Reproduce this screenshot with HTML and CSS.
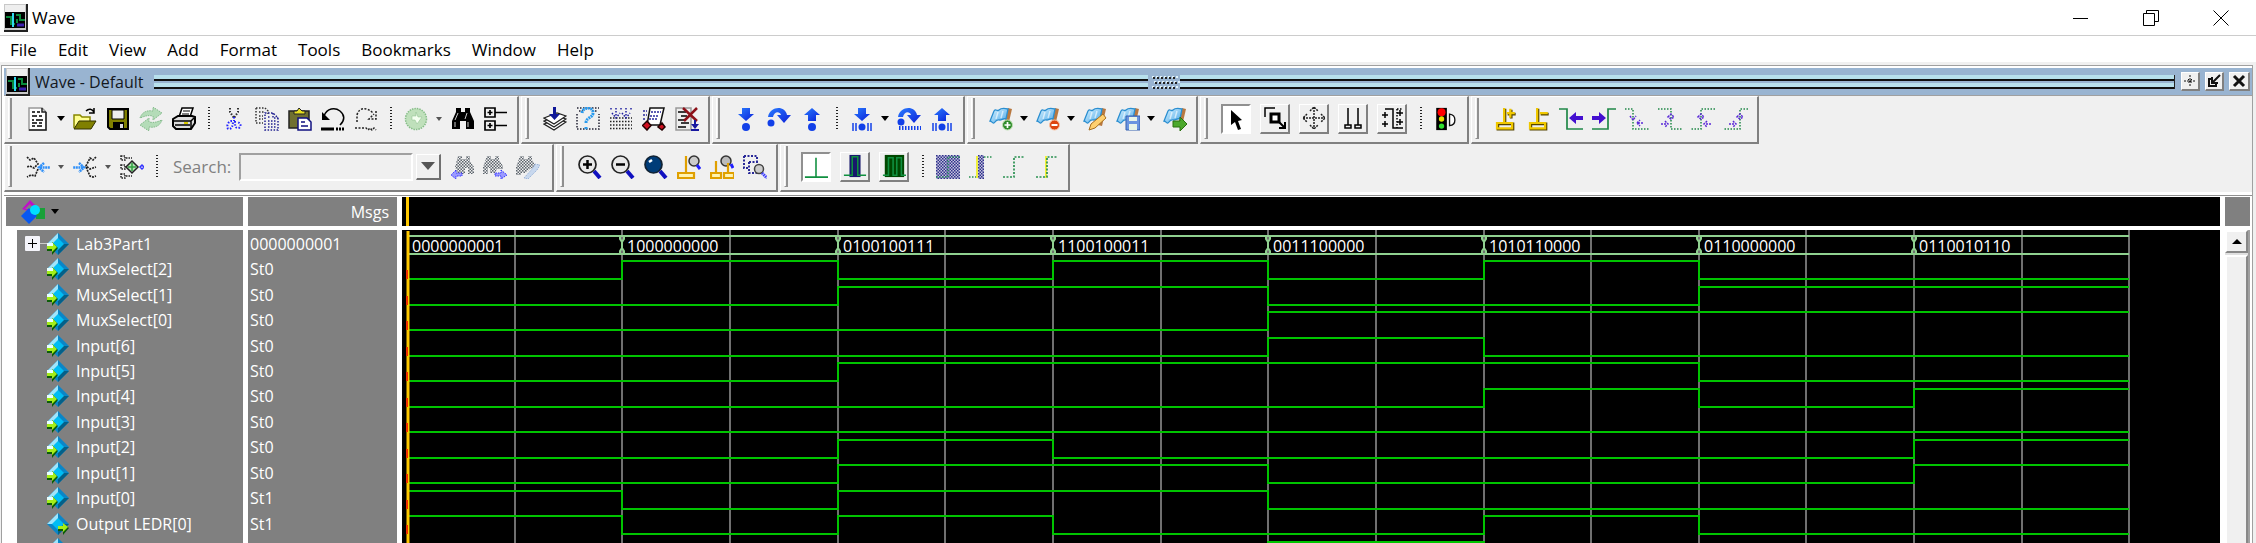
FILE: index.html
```html
<!DOCTYPE html>
<html lang="en">
<head>
<meta charset="utf-8">
<title>Wave</title>
<link rel="stylesheet" href="styles.css">
</head>
<body>
<svg class="defs" aria-hidden="true">
  <defs>
    <pattern id="chk" width="3" height="3" patternUnits="userSpaceOnUse"><path d="M0 0h1.500v1.500H0zM1.500 1.500h1.500v1.500h-1.500z" fill="#5c646c"/></pattern>
    <pattern id="chkblue" width="3" height="3" patternUnits="userSpaceOnUse"><rect width="3" height="3" fill="#c4c4dc"/><path d="M0 0h1.500v1.500H0zM1.500 1.500h1.500v1.500h-1.500z" fill="#30308c"/></pattern>
    <linearGradient id="gb" x1="0" y1="0" x2="1" y2="1"><stop offset="0" stop-color="#2a7dff"/><stop offset="1" stop-color="#0a1fd8"/></linearGradient>
    <linearGradient id="gf" x1="0" y1="0" x2="1" y2="1"><stop offset="0" stop-color="#d8f2ff"/><stop offset="1" stop-color="#4aa8e8"/></linearGradient>
    <symbol id="app" viewBox="0 0 24 28"><path d="M0 0h24v28H0z" fill="#222"/><path d="M0 0h22v26H0z" fill="#c8c8c8"/><path d="M1 1h20v7H1z" fill="#eee"/><path d="M1 8h20v16H1z" fill="#000"/><path d="M2 13h5v7h4M12 11h4v5h5M13 19v-4" fill="none" stroke="#0a8a3c" stroke-width="2"/><path d="M9 9v14" stroke="#30d8f0" stroke-width="2"/><path d="M13 21h7" stroke="#3a20b0" stroke-width="3"/></symbol>
    <symbol id="doc" viewBox="0 0 24 24"><path d="M3 1h13l4 4v18H3z" fill="#fff" stroke="#999" stroke-width="1.500"/><path d="M20 5v18H3M16 1v4h4" fill="none" stroke="#222" stroke-width="1.500"/><path d="M6 5h3m2 0h3M6 9h5m2 0h3M6 13h2m2 0h7M6 16h5m2 0h3M6 19h3m2 0h5" stroke="#000" stroke-width="1.500"/></symbol>
    <symbol id="open" viewBox="0 0 24 24"><path d="M1 21V8h6l2 2h8v4" fill="#ffff90" stroke="#888800" stroke-width="1.500"/><path d="M1 22l5-8h17l-5 8z" fill="#808000" stroke="#303000"/><path d="M13 4c3-3 6-2 8 1m0-4v5h-5" fill="none" stroke="#000" stroke-width="1.500"/></symbol>
    <symbol id="save" viewBox="0 0 24 24"><path d="M2 2h20v20H4l-2-2z" fill="#808000" stroke="#000" stroke-width="2"/><path d="M6 3h12v9H6z" fill="#eee" stroke="#000"/><path d="M7 15h11v7H7z" fill="#000"/><path d="M14 17h3v4h-3z" fill="#ddd"/></symbol>
    <symbol id="refresh" viewBox="0 0 24 24"><g fill="#b4dcb8" stroke="#80b888" stroke-dasharray="1.500 1"><path d="M1 11C3 5 8 3 14 4V0l9 6-9 7V9C9 8 6 9 1 11z"/><path d="M23 13c-2 6-7 8-13 7v4l-9-6 9-7v4c5 1 8 0 13-2z"/></g></symbol>
    <symbol id="print" viewBox="0 0 24 24"><path d="M7 10l3-9h11l-3 9z" fill="#fff" stroke="#000" stroke-width="1.500"/><path d="M11 4h7M10 7h7" stroke="#000"/><path d="M1 12l5-3h14l3 1v6l-4 6H4l-3-3z" fill="#ddd" stroke="#000" stroke-width="2"/><path d="M2 14h17v7M3 18h15m4-7l-3 3" fill="none" stroke="#000" stroke-width="1.500"/><path d="M12 15h4v2h-4z" fill="#d8c800"/></symbol>
    <symbol id="cut" viewBox="0 0 24 24"><g fill="none" stroke-width="2" stroke-dasharray="1.500 1.500"><path d="M8 1v4l4 6 4-6V1" stroke="#333"/><path d="M12 10v4M10 14c-5 0-6 8-3 8s4-4 4-8m2 0c0 4 0 7 3 7s4-5-1-6" stroke="#2020ff"/></g></symbol>
    <symbol id="copy" viewBox="0 0 24 24"><g fill="none" stroke-width="1.500" stroke-dasharray="1.500 1.500"><path d="M1 1h9l3 3v3M1 1v15h7M4 5h5M4 9h4M4 12h4" stroke="#333"/><path d="M10 6h8l5 5v12H10zM18 6v5h5M13 10h3M13 14h8M13 17h8M13 20h8" stroke="#202090"/></g></symbol>
    <symbol id="paste" viewBox="0 0 24 24"><path d="M1 4h20v17H1z" fill="#707030" stroke="#222" stroke-width="1.500"/><path d="M6 7V4h3l2-3 3 3h3v3z" fill="#e8e020" stroke="#222"/><path d="M10 11h9l4 4v8H10z" fill="#fff" stroke="#101080" stroke-width="1.500"/><path d="M13 15h4M13 19h7" stroke="#101080" stroke-width="1.500"/></symbol>
    <symbol id="undo" viewBox="0 0 24 24"><path d="M3 9C6 1 14 0 19 4s5 9 0 14" fill="none" stroke="#000" stroke-width="1.500"/><path d="M1 5l8 8H1z"/><path d="M0 22h13m2 0h2m1 0h2m1 0h2" stroke="#000" stroke-width="3"/></symbol>
    <symbol id="redo" viewBox="0 0 24 24"><path d="M3 15V8c2-8 10-8 16-2m3-2v8h-7l5-5M1 21h11l2 2 2-2 2 2 2-2 2 2" fill="none" stroke="#222" stroke-width="1.500" stroke-dasharray="2 1.500"/></symbol>
    <symbol id="go" viewBox="0 0 24 24"><circle cx="12" cy="12" r="10.500" fill="#bfe0bb" stroke="#86bd88" stroke-width="1.500" stroke-dasharray="1.500 1"/><path d="M12 5v4H8v4h3l2 4 5-7h-4z" fill="#f4fff0" stroke="#8cbd8c" stroke-width=".5"/></symbol>
    <symbol id="find" viewBox="0 0 24 24"><path d="M5 1h5v4h4V1h5v4l4 9v8h-8v-8H9v8H1v-8l4-9z"/><path d="M7 6L4 13M16 6l-2 6M4 15v5M17 15v5" stroke="#ccc"/></symbol>
    <symbol id="tree" viewBox="0 0 24 24"><path d="M1 1h10v9H1zM1 14h10v9H1zM11 5.500h12M11 18.500h12M3.500 5.500h5M6 3v5M3.500 18.500h5M6 16v5" fill="none" stroke="#000" stroke-width="1.700"/></symbol>
    <symbol id="layers" viewBox="0 0 24 24"><g fill="#fff" stroke="#222" stroke-width="1.300"><path d="M1 17l13-5 9 3-12 8z"/><path d="M1 14l13-5 9 3-12 8z"/><path d="M1 11l13-5 9 3-12 8z"/></g><path d="M10 0h3v7h4l-5.500 6L6 7h4z" fill="#101898"/></symbol>
    <symbol id="help" viewBox="0 0 24 24"><path d="M1 7v15h22V7M1 1h22M3 4h4M16 4h6" fill="none" stroke="#223" stroke-width="1.500" stroke-dasharray="1.500 1.500"/><path d="M6 6c1-7 12-6 11 0 0 5-7 4-7 10m0 4v3" fill="none" stroke="#2a9bee" stroke-width="3" stroke-dasharray="2 .7"/></symbol>
    <symbol id="grid" viewBox="0 0 24 24"><path d="M1 11h22M1 14.500h22M1 18h22M1 21.500h22" stroke="#222" stroke-width="1.500" stroke-dasharray="1.500 1.500"/><path d="M2 1v3m5-3v10M3 6l4 5 4-5M12 1v3m5-3v10m-4-5l4 5 4-5m1-5v3" fill="none" stroke="#2020a0" stroke-width="1.500" stroke-dasharray="1.500 1.500"/></symbol>
    <symbol id="scroll" viewBox="0 0 24 24"><path d="M8 1h14l-1 4-3 13H5z" fill="#fff" stroke="#111" stroke-width="1.500"/><path d="M9 5h10M8 9h9M7 12h9M1 4h4M1 8h4M1 12h3" stroke="#28289a" stroke-width="1.500" stroke-dasharray="2 1"/><path d="M5 14l4 4.500L5 23 .5 18.500zM20 16l3 4-3 3-4-3z" fill="#d01020" stroke="#200" stroke-width="1.500"/></symbol>
    <symbol id="docx" viewBox="0 0 24 24"><path d="M1 1h15v22H1z" fill="#eee" stroke="#999" stroke-width="1.500"/><path d="M3 5h8M6 9h6M3 13h7M6 16h8M3 20h8" stroke="#000" stroke-width="1.500"/><path d="M8 1l14 13M22 1L9 14" stroke="#8c1018" stroke-width="2.500"/><path d="M20 13v6M16 23h8" stroke="#1818a0" stroke-width="2"/><path d="M16 17h8l-4 5z" fill="#1818a0"/></symbol>
    <symbol id="down" viewBox="0 0 24 24"><path d="M8 1h8v6h4l-8 7-8-7h4z" fill="url(#gb)"/><circle cx="12" cy="20" r="4" fill="#1240e8"/></symbol>
    <symbol id="over" viewBox="0 0 24 24"><path d="M1 10C3-1 18-2 20 8h4l-7 8-7-8h4C13 4 7 4 6 10z" fill="url(#gb)"/><circle cx="4" cy="16" r="3.500" fill="#1240e8"/></symbol>
    <symbol id="up" viewBox="0 0 24 24"><path d="M12 1l8 7h-4v6H8V8H4z" fill="url(#gb)"/><circle cx="12" cy="20" r="4" fill="#1240e8"/></symbol>
    <symbol id="downb" viewBox="0 0 24 24"><path d="M8 1h8v6h4l-8 7-8-7h4z" fill="url(#gb)"/><circle cx="12" cy="20" r="3.500" fill="#1240e8"/><path d="M3 16v8M6 16v8M18 16v8M21 16v8" stroke="#1240e8" stroke-width="1.500"/></symbol>
    <symbol id="overb" viewBox="0 0 24 24"><path d="M1 10C3-1 18-2 20 8h4l-7 8-7-8h4C13 4 7 4 6 10z" fill="url(#gb)"/><circle cx="4" cy="15" r="3.500" fill="#1240e8"/><path d="M2 21h22" stroke="#1240e8" stroke-width="4" stroke-dasharray="1.500 1.500"/></symbol>
    <symbol id="upb" viewBox="0 0 24 24"><path d="M12 1l8 7h-4v6H8V8H4z" fill="url(#gb)"/><circle cx="12" cy="20" r="3.500" fill="#1240e8"/><path d="M3 16v8M6 16v8M18 16v8M21 16v8" stroke="#1240e8" stroke-width="1.500"/></symbol>
    <symbol id="flag" viewBox="0 0 24 24"><path d="M19 1l4 1-4 17-4-1z" fill="#b87840"/><path d="M5 4c2-3 3 1 5-1s5-2 9-1l-2 10c-3-1-4 1-6 1s-3-1-5 2-3-1-5-1z" fill="url(#gf)" stroke="#2a8ed0" stroke-width="1.300"/><path d="M9 5l-2 7M14 4l-2 7" stroke="#fff" stroke-width="1.500" opacity=".6"/></symbol>
    <symbol id="bplus" viewBox="0 0 24 24"><use href="#flag"/><circle cx="18.500" cy="18" r="5" fill="#2f8a2a" stroke="#bce0b0"/><path d="M18.500 15v6M15.500 18h6" stroke="#fff" stroke-width="1.700"/></symbol>
    <symbol id="bminus" viewBox="0 0 24 24"><use href="#flag"/><circle cx="18.500" cy="18" r="5" fill="#dd4410" stroke="#f8c0a0"/><path d="M15.500 18h6" stroke="#fff" stroke-width="2"/></symbol>
    <symbol id="bedit" viewBox="0 0 24 24"><use href="#flag"/><path d="M6 23l2-6L20 7l3 4-11 10z" fill="#ffd070" stroke="#a87020"/></symbol>
    <symbol id="bsave" viewBox="0 0 24 24"><use href="#flag"/><path d="M10 9h14v14H10z" fill="#6a94e0" stroke="#3560b0"/><path d="M13 10h8v4h-8zM13 17h8v6h-8z" fill="#e8f4e8"/></symbol>
    <symbol id="bgo" viewBox="0 0 24 24"><use href="#flag"/><path d="M10 14h7v-4l7 7-7 7v-4h-7z" fill="#4ca82c" stroke="#2a7010"/></symbol>
    <symbol id="arrow" viewBox="0 0 24 24"><path d="M7 3v15l4-3 3 8 3-1-3-8 4-1z"/></symbol>
    <symbol id="zoommode" viewBox="0 0 24 24"><path d="M2 11V2h10" fill="none" stroke="#000" stroke-width="1.500"/><path d="M8 8h8v8H8z" fill="#fff" stroke="#000" stroke-width="3"/><path d="M16 16l6 6m0-6v6h-6" fill="none" stroke="#000" stroke-width="2"/></symbol>
    <symbol id="pan" viewBox="0 0 24 24"><path d="M12 1v22M1 12h22M8 5l4-4 4 4M8 19l4 4 4-4M5 8l-4 4 4 4M19 8l4 4-4 4" fill="none" stroke="#222" stroke-width="1.500" stroke-dasharray="2 1"/></symbol>
    <symbol id="twocur" viewBox="0 0 24 24"><path d="M7 2v17M17 2v17M4 19h6v3H4zM14 19h6v3h-6z" fill="none" stroke="#000" stroke-width="1.500"/></symbol>
    <symbol id="stretch" viewBox="0 0 24 24"><path d="M5 3h8v19h10M2 9h6M2 18h6M17 7h6M17 16h6M5 6v6M5 15v6M20 4v6M20 13v6" fill="none" stroke="#000" stroke-width="1.500"/><path d="M17 3v19M17 3h6" fill="none" stroke="#000" stroke-width="1.500" stroke-dasharray="1.500 1.500"/></symbol>
    <symbol id="traffic" viewBox="0 0 24 27"><path d="M1 1h12v25H1z"/><circle cx="7" cy="6" r="4.500" fill="#f00"/><circle cx="7" cy="13.500" r="3" fill="#e8e000"/><circle cx="7" cy="21.500" r="3" fill="#30e030"/><path d="M16 8c8 1 8 12 0 13z" fill="#fff" stroke="#111" stroke-width="1.500"/></symbol>
    <symbol id="curadd" viewBox="0 0 24 27"><path d="M4 19h17v6H4zM12 2v17M15 8h9M19 3v10" fill="none" stroke="#554400" stroke-width="3"/><path d="M3 18h17v6H3zM11 1v17M14 7h9M18 2v10" fill="none" stroke="#f0c800" stroke-width="2.500"/></symbol>
    <symbol id="curdel" viewBox="0 0 24 27"><path d="M4 19h17v6H4zM12 2v17M15 8h9" fill="none" stroke="#554400" stroke-width="3"/><path d="M3 18h17v6H3zM11 1v17M14 7h9" fill="none" stroke="#f0c800" stroke-width="2.500"/></symbol>
    <symbol id="eprev" viewBox="0 0 24 24"><path d="M0 2h8v20h16" fill="none" stroke="#208848" stroke-width="1.700"/><path d="M10 11l7-6v4h7v4h-7v4z" fill="#4410d0"/></symbol>
    <symbol id="enext" viewBox="0 0 24 24"><path d="M24 2h-8v20H0" fill="none" stroke="#208848" stroke-width="1.700"/><path d="M14 11L7 5v4H0v4h7v4z" fill="#4410d0"/></symbol>
    <symbol id="e1" viewBox="0 0 24 24"><path d="M0 2h8v20h16" fill="none" stroke="#208848" stroke-width="1.500" stroke-dasharray="1.500 1.500"/><path d="M5 9l3 4 3-4M18 16h-6l3-3m-3 3l3 3" fill="none" stroke="#5a28d8" stroke-width="1.500" stroke-dasharray="2 1"/></symbol>
    <symbol id="e2" viewBox="0 0 24 24"><path d="M0 2h13v20h11" fill="none" stroke="#208848" stroke-width="1.500" stroke-dasharray="1.500 1.500"/><path d="M10 10l3-3 3 3-3 2zM3 17h6M7 14l3 3-3 3" fill="none" stroke="#5a28d8" stroke-width="1.500" stroke-dasharray="2 1"/></symbol>
    <symbol id="e3" viewBox="0 0 24 24"><path d="M24 2H10v20H0" fill="none" stroke="#208848" stroke-width="1.500" stroke-dasharray="1.500 1.500"/><path d="M7 10l3-3 3 3-3 2zM20 17h-6M16 14l-3 3 3 3" fill="none" stroke="#5a28d8" stroke-width="1.500" stroke-dasharray="2 1"/></symbol>
    <symbol id="e4" viewBox="0 0 24 24"><path d="M24 2h-8v20H0" fill="none" stroke="#208848" stroke-width="1.500" stroke-dasharray="1.500 1.500"/><path d="M13 10l3-3 3 3-3 2zM5 17h6M9 14l3 3-3 3" fill="none" stroke="#5a28d8" stroke-width="1.500" stroke-dasharray="2 1"/></symbol>
    <symbol id="mergel" viewBox="0 0 24 24"><path d="M1 2l3 3 4-2 4 6-4 4-4-2-3 1M12 14l-3 7-4-1-4 2" fill="none" stroke="#222" stroke-width="1.700" stroke-dasharray="2 1"/><path d="M18 8l-5 4.500 5 4.500M14 12.500h10" fill="none" stroke="#3090f8" stroke-width="2.500" stroke-dasharray="2 .6"/></symbol>
    <symbol id="merger" viewBox="0 0 24 24"><path d="M23 2l-3 3-3-2-4 8 4 3 3-1 3-1M13 12l4 9 3 1 3-1" fill="none" stroke="#222" stroke-width="1.700" stroke-dasharray="2 1"/><path d="M6 8l5 4.500L6 17M10 12.500H0" fill="none" stroke="#3090f8" stroke-width="2.500" stroke-dasharray="2 .6"/></symbol>
    <symbol id="module" viewBox="0 0 24 24"><path d="M1 1h4v4H1zM1 19h4v4H1zM1 10h4v4H1zM6 3h6M6 21h6" fill="none" stroke="#222" stroke-width="1.500" stroke-dasharray="1.500 1"/><path d="M12 6l6 6-6 6-6-6z" fill="#b8e0b8" stroke="#222" stroke-width="1.500"/><path d="M12 8v8M8 12h8" stroke="#30a040" stroke-width="1.500"/><path d="M22 10l2 2-2 2-2-2z" fill="none" stroke="#33f" stroke-width="1.500"/></symbol>
    <symbol id="findl" viewBox="0 0 24 24"><path d="M8 1h4v3h4V1h4v5l4 6v7h-6v-6h-3v6H8l-3-7z" fill="url(#chk)"/><path d="M6 15l-5 5 5 4v-3h6v-3H6z" fill="#9a9aff" stroke="#3333ff" stroke-dasharray="1.500 1"/></symbol>
    <symbol id="findr" viewBox="0 0 24 24"><path d="M4 1h4v3h4V1h4v4l4 6v3h-6l-2 4H7v-5H5v6H0v-7z" fill="url(#chk)"/><path d="M18 15l6 5-6 4v-3h-6v-3h6z" fill="#9a9aff" stroke="#3333ff" stroke-dasharray="1.500 1"/></symbol>
    <symbol id="findo" viewBox="0 0 24 24"><path d="M4 1h4v3h4V1h4v4l4 6-6 3-5 4H5v2H0v-8z" fill="url(#chk)"/><path d="M8 23l9-10 2-4 5 1-3 5-9 9z" fill="#c8d8ee" stroke="#9cb4d8" stroke-dasharray="1.500 1"/></symbol>
    <symbol id="zin" viewBox="0 0 24 24"><path d="M16 16l6 7" stroke="#1010c0" stroke-width="4"/><circle cx="9.500" cy="9.500" r="8.500" fill="#e8e8e8" stroke="#222" stroke-width="1.700"/><path d="M5 9.500h9M9.500 5v9" stroke="#000" stroke-width="2.500"/></symbol>
    <symbol id="zout" viewBox="0 0 24 24"><path d="M16 16l6 7" stroke="#1010c0" stroke-width="4"/><circle cx="9.500" cy="9.500" r="8.500" fill="#e8e8e8" stroke="#222" stroke-width="1.700"/><path d="M5 9.500h9" stroke="#000" stroke-width="2.500"/></symbol>
    <symbol id="zfull" viewBox="0 0 24 24"><path d="M16 16l6 7" stroke="#1010c0" stroke-width="4"/><circle cx="9.500" cy="9.500" r="8.500" fill="#003c78" stroke="#123" stroke-width="1.700"/><path d="M5 7l3-2" stroke="#fff" stroke-width="2.500"/></symbol>
    <symbol id="zcur" viewBox="0 0 24 24"><path d="M1 18h16v5H1zM9 1v17" fill="#fff4b0" stroke="#e0a000" stroke-width="2.200"/><circle cx="17" cy="6" r="5" fill="#ccc" stroke="#333" stroke-width="1.500"/><path d="M20 10l3 4" stroke="#2020ff" stroke-width="3"/></symbol>
    <symbol id="z2cur" viewBox="0 0 24 24"><circle cx="16" cy="6" r="5" fill="#bbb" stroke="#333" stroke-width="1.500"/><path d="M1 18h10v5H1zM6 6v12M14 18h10v5H14zM18 8v10" fill="#fff4b0" stroke="#e0a000" stroke-width="2.200"/><path d="M21 9l2 4" stroke="#2020ff" stroke-width="3"/></symbol>
    <symbol id="zarea" viewBox="0 0 24 24"><path d="M1 1h13v6M1 1v12h5M6 7h10M6 7v11h8" fill="none" stroke="#282898" stroke-width="2" stroke-dasharray="2 1.500"/><circle cx="16" cy="14" r="4.500" fill="#ccc" stroke="#444" stroke-width="1.500"/><path d="M19 18l5 5" stroke="#3a3aff" stroke-width="3" stroke-dasharray="1.500 .7"/></symbol>
    <symbol id="w1" viewBox="0 0 26 26"><path d="M13 3v20M1 24h25" stroke="#109040" stroke-width="1.700"/></symbol>
    <symbol id="w2" viewBox="0 0 26 26"><path d="M7 1h12v24H7z" fill="#18186c"/><path d="M1 23h9V3h6v20h9" fill="none" stroke="#109040" stroke-width="1.700"/></symbol>
    <symbol id="w3" viewBox="0 0 26 26"><path d="M3 1h21v24H3z" fill="#004800"/><path d="M1 23h6V4h5v19h4V4h5v19h5" fill="none" stroke="#109040" stroke-width="1.700"/></symbol>
    <symbol id="d1" viewBox="0 0 24 24"><path d="M0 0h24v24H0z" fill="url(#chkblue)"/><path d="M0 22h12V2h12" fill="none" stroke="#289060" stroke-width="1.500" stroke-dasharray="1.500 1.500"/></symbol>
    <symbol id="d2" viewBox="0 0 24 24"><path d="M9 0h6v24H9z" fill="url(#chkblue)"/><path d="M8 1v22" stroke="#f0f000" stroke-width="1.500"/><path d="M0 22h7M15 2h8" stroke="#289050" stroke-width="1.500" stroke-dasharray="1.500 1.500"/></symbol>
    <symbol id="d3" viewBox="0 0 24 24"><path d="M1 22h11V2h11" fill="none" stroke="#289050" stroke-width="1.700" stroke-dasharray="2 1.500"/></symbol>
    <symbol id="d4" viewBox="0 0 24 24"><path d="M11 1v22" stroke="#f0f000" stroke-width="1.500"/><path d="M1 22h11V2h11" fill="none" stroke="#289050" stroke-width="1.700" stroke-dasharray="2 1.500"/></symbol>
    <symbol id="gem" viewBox="0 0 22 22"><path d="M11 0l11 11-11 11L0 11z" fill="#0a86c8"/><path d="M11 0v6L6 11H0z" fill="#a0e4fa"/><path d="M22 11H16l-5 5v6z" fill="#046088"/><path d="M11 5l6 6-6 6-6-6z" fill="#00bdf4"/></symbol>
    <symbol id="sigin" viewBox="0 0 22 22"><use href="#gem"/><path d="M0 13h5v-4l6 6-6 7v-4H0z" fill="#0c5c08"/><path d="M0 12h5V9l5 5-5 5v-3H0z" fill="#a4ee18"/><path d="M0 10h6v3H0z" fill="#e8ffff"/></symbol>
    <symbol id="sigout" viewBox="0 0 22 22"><use href="#gem"/><path d="M11 14h5v-4l6 5-6 7v-4h-5z" fill="#0c5c08"/><path d="M11 13h5v-3l5 4-5 5v-3h-5z" fill="#a4ee18"/></symbol>
  </defs>
</svg>

<div class="window">
  <header class="titlebar">
    <svg class="appicon"><use href="#app"/></svg>
    <h1 class="title">Wave</h1>
    <div class="wincontrols">
      <button class="winbtn" aria-label="Minimize"><svg viewBox="0 0 16 16"><path d="M0 8.500h15"/></svg></button>
      <button class="winbtn" aria-label="Restore"><svg viewBox="0 0 16 16"><path d="M.5 3.500h11v12H.5zM3.500 3V.5h12v11H12"/></svg></button>
      <button class="winbtn" aria-label="Close"><svg viewBox="0 0 16 16"><path d="M.5.5l15 15M15.500.5l-15 15"/></svg></button>
    </div>
  </header>

  <nav class="menubar" aria-label="Menu">
    <button class="menu">File</button><button class="menu">Edit</button><button class="menu">View</button><button class="menu">Add</button><button class="menu">Format</button><button class="menu">Tools</button><button class="menu">Bookmarks</button><button class="menu">Window</button><button class="menu">Help</button>
  </nav>

  <main class="dock">
    <div class="panehead">
      <svg class="appicon"><use href="#app"/></svg>
      <h2 class="panetitle">Wave - Default</h2>
      <div class="grip"></div>
      <svg class="gripdots" viewBox="0 0 32 14" aria-hidden="true"><path d="M4 2h26M6 7h26M4 12h26" stroke="#e0f2f8" stroke-width="2" stroke-dasharray="2 2"/><path d="M5 3h24M7 8h24M5 13h24" stroke="#222" stroke-width="2" stroke-dasharray="2 2"/></svg>
      <div class="grip end"></div>
      <button class="panebtn" aria-label="Add window"><svg viewBox="0 0 14 14"><path d="M7 1v12M1 7h12M5 5l4 4M9 5l-4 4" stroke-width="1" stroke-dasharray="2 1"/></svg></button>
      <button class="panebtn" aria-label="Undock"><svg viewBox="0 0 14 14"><path d="M6 5H2v7h7V8M13 1L6 8M5 3v6h6" stroke-width="2"/></svg></button>
      <button class="panebtn" aria-label="Close pane"><svg viewBox="0 0 14 14"><path d="M2 2l10 10M12 2L2 12" stroke-width="3"/></svg></button>
    </div>

    <div class="toolbars">
      <div class="toolrow" id="row1"></div>
      <div class="toolrow" id="row2"></div>
    </div>

    <div class="wavepane">
      <div class="namehead">
        <svg class="shapes" viewBox="0 0 24 24"><path d="M9 0l8 8-5 5-11-4z" fill="#c010c8"/><path d="M4 9l5-5 4 5z" fill="#808080"/><path d="M15 8h9v11h-9z" fill="#18a038"/><path d="M8 8l8 8-8 8-8-8z" fill="#0858f0"/><circle cx="14" cy="10" r="5" fill="#00e0ff"/></svg>
        <button class="drop" aria-label="Signal filter"></button>
      </div>
      <div class="valuehead">Msgs</div>
      <div class="ruler"><span class="cursor"></span></div>
      <div class="corner"></div>
      <div class="names"><div class="signals" id="names"></div></div>
      <div class="values"><div class="signals" id="values"></div></div>
      <div class="plot"><svg class="waves" id="waves" role="img" aria-label="Waveforms"></svg></div>
      <div class="scroll">
        <button class="scrollup" aria-label="Scroll up"><span class="tri"></span></button>
        <div class="thumb"></div>
      </div>
    </div>
  </main>
</div>
<script src="wave.js"></script>
</body>
</html>
```

FILE: styles.css
```css
* { box-sizing: border-box; }
body { margin: 0; background: #f0f0f0; color: #000; font: 17px/24px "Open Sans", "Noto Sans", sans-serif; overflow: hidden; }
button { padding: 0; border: 0; background: none; color: inherit; font: inherit; }
.defs { position: absolute; width: 0; height: 0; }
.window { display: flex; flex-direction: column; height: 100vh; }

.titlebar { display: flex; align-items: center; height: 36px; flex: none; padding-left: 4px; background: #fff; border-bottom: 1px solid #ccc; }
.appicon { width: 24px; height: 28px; flex: none; }
.title { margin: 0 auto 0 4px; font-size: 17px; font-weight: 400; }
.wincontrols { display: flex; }
.winbtn { width: 70px; height: 34px; display: grid; place-items: center; }
.winbtn svg { width: 16px; height: 16px; fill: none; stroke: #000; stroke-width: 1; }

.menubar { display: flex; gap: 1px; height: 29px; flex: none; background: linear-gradient(#fff 26px, #f0f0f0 26px); }
.menu { padding: 0 10px; height: 28px; font-size: 17px; line-height: 28px; }

.dock { flex: 1; min-height: 0; display: flex; flex-direction: column; margin: 0 3px 0 1px; border: 1px solid #a0a0a0; border-width: 1px 1px 0; padding: 2px 0 0 2px; background: #fff; }
.panehead { display: flex; align-items: center; height: 28px; flex: none; padding: 0 2px 0 2px; background: #99b4d1; border-bottom: 1px solid #a0a0a0; }
.panetitle { margin: 0 10px 0 5px; font-size: 16px; font-weight: 400; color: #14181e; }
.grip { flex: 1; height: 14px; background: linear-gradient(#b8e0ec 4px, #111 4px 6px, #99b4d1 6px 8px, #b8e0ec 8px 12px, #111 12px); }
.grip.end { margin-right: 6px; border-right: 1px solid #222; }
.gripdots { width: 32px; height: 14px; fill: none; }
.panebtn { width: 19px; height: 19px; margin-right: 5px; display: grid; place-items: center; background: #f0f0f0; border: 1px solid #fff; border-right: 2px solid #808080; border-bottom: 2px solid #808080; }
.panebtn:last-child { margin-right: 0; width: 21px; }
.panebtn svg { width: 14px; height: 14px; fill: none; stroke: #111; }

.toolbars { background: #f0f0f0; flex: none; }
.toolrow { display: flex; gap: 2px; height: 48px; }
.toolbar { display: flex; align-items: center; height: 48px; padding: 0 5px 2px 0; border: 1px solid #fff; border-right: 2px solid #808080; border-bottom: 2px solid #808080; }
.handle { width: 4px; height: 41px; margin: 0 9px 0 3px; border-left: 1px solid #fff; border-right: 2px solid #909090; border-bottom: 1px solid #909090; }
.tool { width: 33px; height: 30px; display: grid; place-items: center; }
.tool svg { width: 24px; height: 24px; }
.drop { width: 14px; height: 30px; display: grid; place-items: center; }
.drop::before { content: ""; border: 4px solid transparent; border-top: 5px solid #000; border-bottom: 0; }
.drop.dim::before { border-width: 3px; border-top: 4px solid #555; border-bottom: 0; }
.sep { width: 17px; height: 24px; display: flex; justify-content: center; }
.sep::before { content: ""; width: 2px; height: 24px; background: repeating-linear-gradient(#222 0 1px, transparent 1px 3px); }
.toggle { width: 30px; height: 30px; margin: 0 5px 0 4px; display: grid; place-items: center; border: 1px solid #fff; border-right: 2px solid #808080; border-bottom: 2px solid #808080; }
.toggle svg { width: 24px; height: 24px; }
.toggle.on { background: #fff; border: 2px solid #fff; border-left-color: #909090; border-top-color: #909090; }
.search { margin: 0 8px; font-size: 17px; color: #808080; }
.query { width: 174px; height: 28px; border: 2px solid #fff; border-top-color: #a0a0a0; border-left-color: #a0a0a0; background: #f0f0f0; font: inherit; outline: none; }
.combo { width: 25px; height: 26px; margin: 0 4px 0 3px; display: grid; place-items: center; border: 1px solid #fff; border-right: 2px solid #707070; border-bottom: 2px solid #707070; }
.combo::before { content: ""; border: 7px solid transparent; border-top: 8px solid #555; border-bottom: 0; }
#row2 .toolbar:first-child { padding-right: 8px; }

.wavepane { flex: 1; min-height: 0; display: grid; grid-template-columns: 237px 149px 1fr 25px; grid-template-rows: 29px 1fr; gap: 4px 5px; margin-top: 3px; padding: 1px 2px 0 2px; border-top: 1px solid #909090; }
.namehead, .valuehead, .corner { background: #808080; }
.namehead { display: flex; align-items: center; padding-left: 15px; }
.shapes { width: 24px; height: 24px; margin-right: 3px; }
.valuehead { padding: 3px 8px 0; color: #fff; text-align: right; font-size: 16px; }
.ruler { background: #000; padding-left: 4px; display: flex; }
.cursor { width: 3px; background: #ffc800; }
.names { background: #808080; border-left: 11px solid #fff; overflow: hidden; }
.values { background: #808080; overflow: hidden; }
.signals { display: grid; height: 332px; padding-top: 1px; grid-template-rows: repeat(13, 1fr); color: #fff; font-size: 16px; }
.signal { display: flex; align-items: center; padding-left: 30px; }
.signal svg { width: 22px; height: 22px; margin-right: 7px; flex: none; }
.signal.group { padding-left: 8px; }
.expand { width: 15px; height: 15px; display: grid; place-items: center; background: linear-gradient(#000, #000) center / 9px 1px no-repeat, linear-gradient(#000, #000) center / 1px 9px no-repeat, #f4f4fa; border-radius: 1px; }
.link { width: 7px; height: 1px; background: #ccc; }
.value { padding-left: 2px; display: flex; align-items: center; }
.plot { background: #000; overflow: hidden; min-width: 0; }
.waves { display: block; width: 100%; height: 332px; font-size: 16px; }
.gridline { stroke: #707070; stroke-width: 2; }
.trace { fill: none; stroke: #00c400; stroke-width: 2; }
.bus { fill: none; stroke: #8fd08f; stroke-width: 2; }
.busval { fill: #fff; }
.cursorline { stroke: #ffc800; stroke-width: 3; }
.tick { stroke: #f03000; stroke-width: 2; }
.scroll { display: flex; flex-direction: column; gap: 2px; background: #e0e0e0; border-right: 2px solid #a0a0a0; }
.scrollup { height: 23px; display: grid; place-items: center; background: #f0f0f0; border: 2px solid #fff; border-right-color: #888; border-bottom-color: #888; }
.tri { border: 5px solid transparent; border-bottom: 5px solid #000; border-top: 0; }
.thumb { flex: 1; background: #f0f0f0; border: 2px solid #fff; border-right-color: #888; border-bottom: 0; }
```

FILE: wave.js
```js
const icon = (id) => `<svg aria-hidden="true"><use href="#${id}"/></svg>`;

// "id:Label" is a tool, "!id:Label" a toggle, "|" a separator, "v" a drop-down arrow, "d" a disabled one.
function item(spec) {
  if (spec === "|") return '<span class="sep"></span>';
  if (spec === "v") return '<button class="drop" aria-label="More"></button>';
  if (spec === "d") return '<button class="drop dim" aria-label="More"></button>';
  if (spec === "search") {
    return '<label class="search" for="query">Search:</label><input class="query" id="query" type="text"><button class="combo" aria-label="Search history"></button>';
  }
  const [id, label] = spec.replace(/^[!*]/, "").split(":");
  const kind = spec[0] === "!" ? "toggle" : spec[0] === "*" ? "toggle on" : "tool";
  return `<button class="${kind}" aria-label="${label}">${icon(id)}</button>`;
}
const bar = (specs) => `<div class="toolbar"><span class="handle"></span>${specs.map(item).join("")}</div>`;

document.getElementById("row1").innerHTML = [
  ["doc:New", "v", "open:Open", "save:Save", "refresh:Reload", "print:Print", "|", "cut:Cut", "copy:Copy", "paste:Paste", "undo:Undo", "redo:Redo", "|", "go:Add", "d", "find:Find", "tree:Collapse"],
  ["layers:Compile", "help:Simulate", "grid:Compile all", "scroll:Run script", "docx:Break"],
  ["down:Step into", "over:Step over", "up:Step out", "|", "downb:Step into instance", "v", "overb:Step over instance", "upb:Step out instance"],
  ["bplus:Add bookmark", "v", "bminus:Delete bookmark", "v", "bedit:Edit bookmark", "bsave:Save bookmarks", "v", "bgo:Go to bookmark"],
  ["*arrow:Select", "!zoommode:Zoom mode", "!pan:Pan", "!twocur:Two cursors", "!stretch:Edit mode", "|", "traffic:Stop drawing"],
  ["curadd:Insert cursor", "curdel:Delete cursor", "eprev:Previous transition", "enext:Next transition", "e1:Previous falling", "e2:Next falling", "e3:Previous rising", "e4:Next rising"],
].map(bar).join("");

document.getElementById("row2").innerHTML = [
  ["mergel:Drivers", "d", "merger:Readers", "d", "module:Module", "|", "search", "findl:Find previous", "findr:Find next", "findo:Search options"],
  ["zin:Zoom in", "zout:Zoom out", "zfull:Zoom full", "zcur:Zoom on cursor", "z2cur:Zoom between cursors", "zarea:Zoom range"],
  ["*w1:Line", "!w2:Block", "!w3:Filled", "|", "d1:Expanded", "d2:Expand at cursor", "d3:Collapsed", "d4:Collapse at cursor"],
].map(bar).join("");

// One character per time step: the level of the signal in that step.
const bus = ["0000000001", "1000000000", "0100100111", "1100100011", "0011100000", "1010110000", "0110000000", "0110010110"];
const signals = [
  ["Lab3Part1", "0000000001", null],
  ["MuxSelect[2]", "St0", "01010100"],
  ["MuxSelect[1]", "St0", "00110011"],
  ["MuxSelect[0]", "St0", "00001111"],
  ["Input[6]", "St0", "00001000"],
  ["Input[5]", "St0", "00111100"],
  ["Input[4]", "St0", "00000101"],
  ["Input[3]", "St0", "00000000"],
  ["Input[2]", "St0", "00100001"],
  ["Input[1]", "St0", "00110001"],
  ["Input[0]", "St1", "10110000"],
  ["Output LEDR[0]", "St1", "10100100"],
  ["Intermediate[0]", "", "00001000"],
];

document.getElementById("names").innerHTML = signals.map(([name], i) => {
  const lead = i === 0 ? '<button class="expand" aria-label="Expand"></button><span class="link"></span>' : "";
  return `<div class="signal${i === 0 ? " group" : ""}">${lead}${icon(i > 10 ? "sigout" : "sigin")}${name}</div>`;
}).join("");
document.getElementById("values").innerHTML = signals.map((s) => `<div class="value">${s[1]}</div>`).join("");

const x = (step) => Math.round(5 + step * 215.3);
const rowTop = (i) => Math.floor(i * 25.5);
let out = "";
for (let h = 1; h <= 16; h++) out += `<path class="gridline" d="M${x(h / 2)} 0V332"/>`;
signals.forEach(([, , levels], i) => {
  if (!levels) return;
  const hi = rowTop(i) + 6, lo = hi + 18;
  let d = "";
  [...levels].forEach((v, s) => {
    const y = v === "1" ? hi : lo;
    d += `${s ? "V" : `M${x(0)} `}${y}H${x(s + 1)}`;
  });
  out += `<path class="trace" d="${d}"/>`;
});
bus.forEach((v, s) => {
  const a = x(s), b = x(s + 1);
  out += `<path class="bus" d="M${a} 6H${b}M${a} 24H${b}"/>`;
  if (s) out += `<path class="bus" d="M${a - 2} 6v3l2 3v6l-2 3v3M${a + 2} 6v3l-2 3v6l2 3v3"/>`;
  out += `<text class="busval" x="${a + 5}" y="22">${v}</text>`;
});
out += '<path class="cursorline" d="M6 1V332"/>';
signals.forEach((s, i) => { if (i) out += `<path class="tick" d="M5 ${rowTop(i) + 15}v9"/>`; });
document.getElementById("waves").innerHTML = out;
```
